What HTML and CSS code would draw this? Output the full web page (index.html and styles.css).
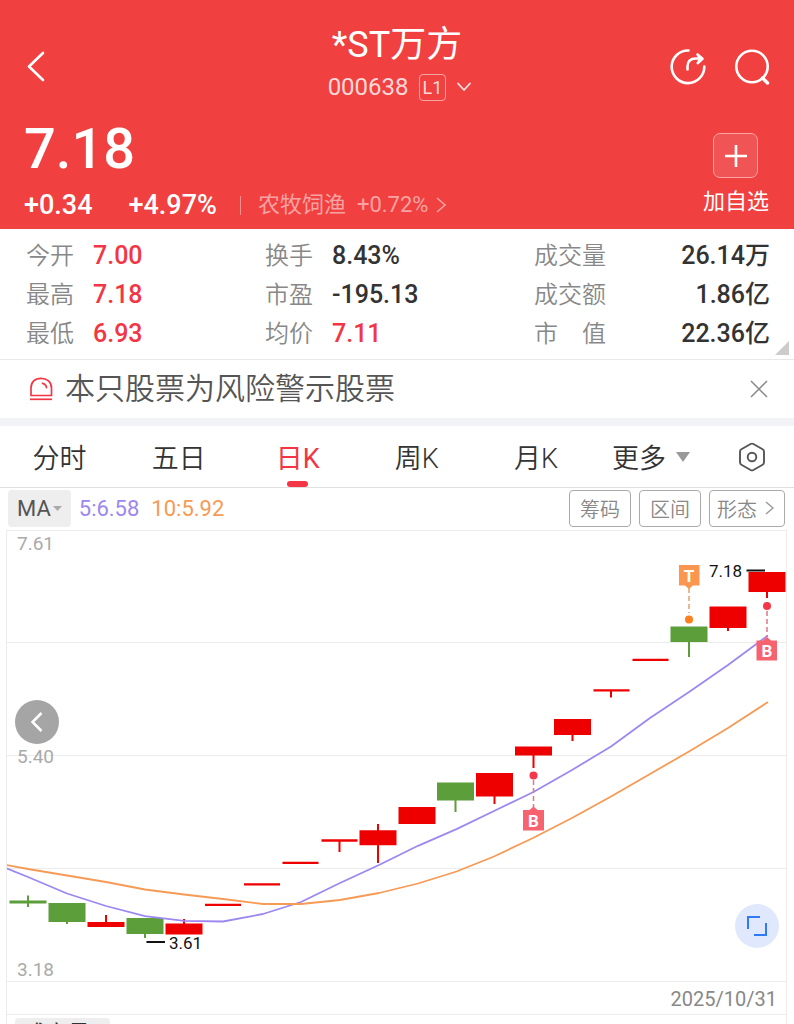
FILE: index.html
```html
<!DOCTYPE html>
<html lang="zh-CN">
<head>
    <meta charset="UTF-8">
    <meta name="viewport" content="width=device-width, initial-scale=1.0">
    <title>*ST万方 000638</title>
    <link rel="stylesheet" href="styles.css">
</head>
<body>
<div class="app">

    <!-- Header -->
    <header class="header">
        <div class="topbar">
            <button class="icon-btn back" aria-label="返回">
                <svg width="24" height="32" viewBox="0 0 24 32"><path d="M19 3L5 16.500l14 13.500" fill="none" stroke="#fff" stroke-width="2.600" stroke-linecap="round" stroke-linejoin="round"/></svg>
            </button>
            <div class="title">
                <h1>*ST万方</h1>
                <button class="code">
                    <span>000638</span>
                    <span class="level">L1</span>
                    <svg width="16" height="10" viewBox="0 0 16 10"><path d="M2 1.500l6 6.500 6-6.500" fill="none" stroke="#fff" stroke-opacity=".85" stroke-width="1.800" stroke-linecap="round" stroke-linejoin="round"/></svg>
                </button>
            </div>
            <div class="actions">
                <button class="icon-btn" aria-label="分享">
                    <svg width="38" height="38" viewBox="0 0 38 38" fill="none" stroke="#fff" stroke-width="2.600" stroke-linecap="round" stroke-linejoin="round"><path d="M20.500 3.500A16.300 16.300 0 1 0 36.300 19.500"/><path d="M19.500 22.500v-3c0-5.200 3.200-8 8-8h6"/><path d="M29.500 7.500l5 4.200-4.700 4.300" fill="#fff"/></svg>
                </button>
                <button class="icon-btn" aria-label="搜索">
                    <svg width="38" height="38" viewBox="0 0 38 38" fill="none" stroke="#fff" stroke-width="2.600" stroke-linecap="round"><circle cx="20" cy="19.500" r="15.700"/><path d="M30.500 31l5 5" stroke-width="3.400"/></svg>
                </button>
            </div>
        </div>

        <div class="quote">
            <div class="quote-main">
                <div class="price">7.18</div>
                <div class="change">
                    <span>+0.34</span>
                    <span>+4.97%</span>
                    <a class="sector" href="#">农牧饲渔 <span>+0.72%</span>
                        <svg width="12" height="18" viewBox="0 0 12 18"><path d="M2 2l8 7-8 7" fill="none" stroke="currentColor" stroke-width="1.600"/></svg>
                    </a>
                </div>
            </div>
            <button class="add">
                <span class="add-box"><svg width="24" height="24" viewBox="0 0 24 24"><path d="M12 1v22M1 12h22" stroke="#fff" stroke-width="2.600"/></svg></span>
                加自选
            </button>
        </div>
    </header>

    <!-- Key figures -->
    <section class="stats">
        <dl>
            <div><dt>今开</dt><dd class="up">7.00</dd></div>
            <div><dt>最高</dt><dd class="up">7.18</dd></div>
            <div><dt>最低</dt><dd class="up">6.93</dd></div>
        </dl>
        <dl>
            <div><dt>换手</dt><dd>8.43%</dd></div>
            <div><dt>市盈</dt><dd>-195.13</dd></div>
            <div><dt>均价</dt><dd class="up">7.11</dd></div>
        </dl>
        <dl class="totals">
            <div><dt>成交量</dt><dd>26.14万</dd></div>
            <div><dt>成交额</dt><dd>1.86亿</dd></div>
            <div><dt>市　值</dt><dd>22.36亿</dd></div>
        </dl>
    </section>

    <!-- Risk warning -->
    <div class="notice">
        <svg width="24" height="26" viewBox="0 0 24 26" fill="none" stroke="#f23645" stroke-width="1.700"><path d="M2 19.500V12C2 6 6 2.300 12 2.300S22.500 6 22.500 12v7.500z"/><path d="M13.500 7.300c2.200.4 3.700 2 4 4.300" stroke-linecap="round"/><path d="M1 23.300h22"/></svg>
        <p>本只股票为风险警示股票</p>
        <button class="icon-btn" aria-label="关闭">
            <svg width="18" height="18" viewBox="0 0 18 18"><path d="M1 1l16 16M17 1L1 17" stroke="#888" stroke-width="1.500"/></svg>
        </button>
    </div>

    <!-- Period tabs -->
    <nav class="tabs">
        <button>分时</button>
        <button>五日</button>
        <button class="active">日K</button>
        <button>周K</button>
        <button>月K</button>
        <button class="more">更多 <svg width="14" height="10" viewBox="0 0 14 10"><path d="M0 0h14L7 10z" fill="#999"/></svg></button>
        <button class="settings" aria-label="设置">
            <svg width="28" height="30" viewBox="0 0 28 30" fill="none" stroke="#555" stroke-width="1.900"><path d="M12.600 2q1.400-.8 2.800 0l9.200 5.300q1.400.8 1.400 2.400v10.600q0 1.600-1.400 2.400L15.400 28q-1.400.8-2.800 0l-9.200-5.300Q2 21.900 2 20.300V9.700q0-1.600 1.400-2.400z"/><circle cx="14" cy="15" r="4.300"/></svg>
        </button>
    </nav>

    <!-- Indicator bar -->
    <div class="indicators">
        <button class="pill">MA<svg width="9" height="5" viewBox="0 0 9 5"><path d="M0 0h9L4.500 5z" fill="#aaa"/></svg></button>
        <span class="ma5">5:6.58</span>
        <span class="ma10">10:5.92</span>
        <div class="tools">
            <button>筹码</button>
            <button>区间</button>
            <button>形态 <svg width="9" height="14" viewBox="0 0 9 14"><path d="M1 1l7 6-7 6" fill="none" stroke="#999" stroke-width="1.400"/></svg></button>
        </div>
    </div>

    <!-- Daily candles -->
    <div class="chart">
        <div class="plot">
            <svg viewBox="7 0 779 450" role="img" aria-label="日K线图">
                <g stroke="#ececec"><path d="M7 111.500h779M7 224.500h779M7 337.500h779"/></g>

                <g class="axis">
                    <text x="17" y="19">7.61</text>
                    <text x="17" y="232">5.40</text>
                    <text x="17" y="445">3.18</text>
                </g>

                <!-- falling days -->
                <path fill="#5c9e3a" d="M9.500 369.500h37v3h-37zM48.500 372h37v19h-37zM126.500 387h37v16h-37zM437 251.500h37v18h-37zM670.500 95.500h37v15.500h-37z"/>
                <path stroke="#5c9e3a" stroke-width="2" d="M28 364.500v11.500M67 390v3M145 402v5M455.500 269v12M689 110v16"/>

                <!-- rising days -->
                <path fill="#ee0000" d="M87.500 391h37v5h-37zM165.500 392.500h37v11h-37zM205 372.700h36v2.400h-36zM244 352.200h36v2.400h-36zM282.500 330.700h36v2.400h-36zM321.500 308.300h36v2.400h-36zM359.500 299.300h37v15h-37zM398.500 276h37v17h-37zM476 242h37v23.500h-37zM515 215.500h37v9h-37zM554 188h37v16h-37zM593.500 158.200h36v2.400h-36zM632.500 127.700h36v2.400h-36zM709.500 75.500h37v21.500h-37zM748.500 41h37v20h-37z"/>
                <path stroke="#ee0000" stroke-width="2" d="M106 384v8M184 388v5M339.500 310v11M378 293v39M494.500 265v8M533.500 224v13M572.500 203v7M611 160v6.500M728 96v4M767 60v7"/>

                <path class="line" stroke="#9d87f0" d="M6 337l22 9 39 16.500 39 12.500 39 10.200 39 4.600 39 .7 40-7.500 38-12 39-19 39-18 39-19.200 38.500-16.700L494 280l39-18.700L572 239l39-23.500 39-28.500 39-26 39-27 40-29.500"/>
                <path class="line" stroke="#f79a55" d="M6 334l22 4 39 6.500 39 6.500 39 7.500 39 5 39 4.500 40 5h38l39-4 39-7 39-9.500 38.500-12L494 325.500l39-18.500 39-20 39-21.500 39-22.500 39-22.500 39-23.500 40-26"/>

                <!-- low and high labels -->
                <path d="M146.500 411h18.500M746.500 39.500h18.500" stroke="#111" stroke-width="2"/>
                <g class="extreme">
                    <text x="169" y="418">3.61</text>
                    <text x="709" y="46">7.18</text>
                </g>

                <!-- trade marks -->
                <g class="mark">
                    <path d="M689 57v25" stroke="#e5a069"/>
                    <circle cx="689" cy="88.500" r="4" fill="#ff7f1e"/>
                    <path d="M679 34h20.500v20.500H693l-4 3.500-4-3.500h-6z" fill="#fb9650"/>
                    <text x="689" y="50.500">T</text>

                    <path d="M533.500 249v27" stroke="#dc7a84"/>
                    <circle cx="533.500" cy="244.500" r="4" fill="#f5374a"/>
                    <path d="M523 279h6.500l4-3.500 4 3.500h6.500v20.500h-21z" fill="#f7626f"/>
                    <text x="533.500" y="295.500">B</text>

                    <path d="M767 80v26" stroke="#dc7a84"/>
                    <circle cx="767" cy="75" r="4" fill="#f5374a"/>
                    <path d="M756.500 109.500h6.500l4-3.500 4 3.500h6v20h-20.500z" fill="#f7626f"/>
                    <text x="767" y="126">B</text>
                </g>
            </svg>
            <button class="round prev" aria-label="上一段">
                <svg width="12" height="20" viewBox="0 0 12 20"><path d="M10.500 1L1.500 10l9 9" fill="none" stroke="#fff" stroke-width="2.600"/></svg>
            </button>
            <button class="round expand" aria-label="全屏">
                <svg width="20" height="20" viewBox="0 0 20 20"><path d="M1 13V1h12M19 7v12H7" fill="none" stroke="#2f7bf6" stroke-width="2"/></svg>
            </button>
        </div>
        <div class="date">2025/10/31</div>
        <div class="volume">
            <button class="pill">成交量<svg width="9" height="5" viewBox="0 0 9 5"><path d="M0 0h9L4.500 5z" fill="#aaa"/></svg></button>
        </div>
    </div>

</div>
</body>
</html>
```

FILE: styles.css
```css
* {
    box-sizing: border-box;
}

body {
    margin: 0;
    background: #fff;
    color: #333;
    font-family: Roboto, "Noto Sans CJK SC", sans-serif;
}

button {
    margin: 0;
    padding: 0;
    border: 0;
    background: none;
    color: inherit;
    font: inherit;
    cursor: pointer;
}

svg {
    display: block;
    flex: none;
}

.app {
    height: 100vh;
    overflow: hidden;
}

/* Header */
.header {
    background: #f04040;
    color: #fff;
    padding: 24px 24px 5px;
}

.topbar {
    display: grid;
    grid-template-columns: 1fr auto 1fr;
    align-items: center;
}

.title {
    display: flex;
    flex-direction: column;
    align-items: center;
}

.title h1 {
    margin: 0;
    font-size: 36px;
    line-height: 42px;
    font-weight: 400;
}

.code {
    display: flex;
    align-items: center;
    gap: 10px;
    height: 42px;
    padding-left: 6px;
    font-size: 24px;
    color: #fcd9d9;
}

.level {
    border: 1px solid #f8a5a5;
    border-radius: 4px;
    padding: 0 3px;
    font-size: 18px;
    line-height: 25px;
}

.back {
    justify-self: start;
}

.actions {
    display: flex;
    justify-content: flex-end;
    gap: 26px;
}

.quote {
    display: flex;
    justify-content: space-between;
    padding-top: 4px;
}

.price {
    font-size: 56px;
    line-height: 74px;
    font-weight: 500;
}

.change {
    display: flex;
    align-items: center;
    gap: 36px;
    height: 38px;
    font-size: 27px;
    font-weight: 500;
}

.sector {
    display: flex;
    align-items: center;
    gap: 11px;
    margin-left: -13px;
    color: #f8a3a3;
    font-size: 22px;
    font-weight: 400;
    line-height: 22px;
    text-decoration: none;
}

.sector::before {
    content: "";
    width: 1px;
    height: 19px;
    margin-right: 6px;
    background: #f58f8f;
}

.sector svg {
    margin-left: -4px;
}

.add {
    display: flex;
    flex-direction: column;
    align-items: center;
    gap: 8px;
    padding: 21px 1px 0 0;
    font-size: 22px;
    line-height: 32px;
}

.add-box {
    display: flex;
    align-items: center;
    justify-content: center;
    width: 45px;
    height: 45px;
    border: 1px solid #f8a5a5;
    border-radius: 7px;
    background: #f15454;
}

/* Key figures */
.stats {
    position: relative;
    display: grid;
    grid-template-columns: 239fr 269fr 236fr;
    padding: 7px 24px 6px 26px;
    border-bottom: 1px solid #e8e8e8;
}

.stats::after {
    content: "";
    position: absolute;
    right: 5px;
    bottom: 4px;
    border-left: 14px solid transparent;
    border-bottom: 14px solid #ccc;
}

.stats dl {
    margin: 0;
}

.stats dl div {
    display: flex;
    align-items: center;
    gap: 19px;
    height: 39px;
}

.stats dt {
    color: #888;
    font-size: 24px;
    font-weight: 350;
    line-height: 36px;
}

.stats dd {
    margin: 0;
    font-size: 25px;
    font-weight: 500;
    line-height: 36px;
}

.stats .up {
    color: #f23645;
}

.totals div {
    justify-content: space-between;
}

/* Risk warning */
.notice {
    display: flex;
    align-items: center;
    gap: 12px;
    height: 58px;
    padding: 0 26px 0 29px;
}

.notice p {
    flex: 1;
    margin: 0;
    color: #555;
    font-size: 30px;
    font-weight: 350;
    line-height: 44px;
}

/* Period tabs */
.tabs {
    display: grid;
    grid-template-columns: repeat(6, 3fr) 2fr;
    height: 70px;
    border-top: 8px solid #f2f3f7;
    border-bottom: 1px solid #e0e0e0;
}

.tabs button {
    position: relative;
    display: flex;
    align-items: center;
    justify-content: center;
    gap: 10px;
    color: #333;
    font-size: 27px;
    font-weight: 350;
}

.tabs .more {
    padding-right: 8px;
}

.tabs .settings {
    padding-right: 4px;
}

.tabs .active {
    color: #f23645;
    font-weight: 400;
}

.tabs .active::after {
    content: "";
    position: absolute;
    bottom: 0;
    width: 21px;
    height: 6px;
    border-radius: 3px;
    background: #f23645;
}

/* Indicator bar */
.indicators {
    display: flex;
    align-items: center;
    gap: 12px;
    height: 42px;
    padding: 0 9px 2px 8px;
    font-size: 22px;
}

.pill {
    display: flex;
    align-items: center;
    gap: 2px;
    height: 37px;
    padding: 0 9px;
    border-radius: 4px;
    background: #eee;
    color: #555;
    font-size: 22px;
}

.indicators .pill {
    margin-right: -4px;
}

.ma5 {
    color: #9d87f0;
}

.ma10 {
    color: #f79a55;
}

.tools {
    display: flex;
    gap: 8px;
    margin-left: auto;
}

.tools button {
    display: flex;
    align-items: center;
    gap: 8px;
    height: 37px;
    padding: 0 10px;
    border: 1px solid #aaa;
    border-radius: 4px;
    color: #888;
    font-size: 20px;
    font-weight: 350;
}

.tools button:last-child {
    padding: 0 10px 0 7px;
}

/* Chart */
.chart {
    margin: 0 7px 0 6px;
    border: 1px solid #ececec;
    border-bottom: 0;
}

.plot {
    position: relative;
}

.plot > svg {
    width: 100%;
    height: auto;
}

.axis {
    fill: #aaa;
    font-size: 19px;
}

.extreme {
    fill: #111;
    font-size: 17px;
}

.line {
    fill: none;
    stroke-width: 1.8px;
    stroke-linejoin: round;
}

.mark path {
    stroke-width: 1.5px;
    stroke-dasharray: 5 3;
}

.mark text {
    fill: #fff;
    font-size: 17px;
    font-weight: 700;
    text-anchor: middle;
}

.round {
    position: absolute;
    display: flex;
    align-items: center;
    justify-content: center;
    width: 44px;
    height: 44px;
    border-radius: 50%;
}

.prev {
    left: 8px;
    top: 169px;
    background: #a5a5a5;
}

.expand {
    right: 7px;
    bottom: 33px;
    background: #e0e8fd;
}

.date {
    height: 34px;
    padding-right: 9px;
    border-top: 1px solid #ececec;
    border-bottom: 1px solid #ececec;
    color: #888;
    font-size: 20px;
    line-height: 34px;
    text-align: right;
}

.volume {
    padding: 3px 8px;
}

.volume .pill {
    height: 26px;
    color: #333;
}
```
